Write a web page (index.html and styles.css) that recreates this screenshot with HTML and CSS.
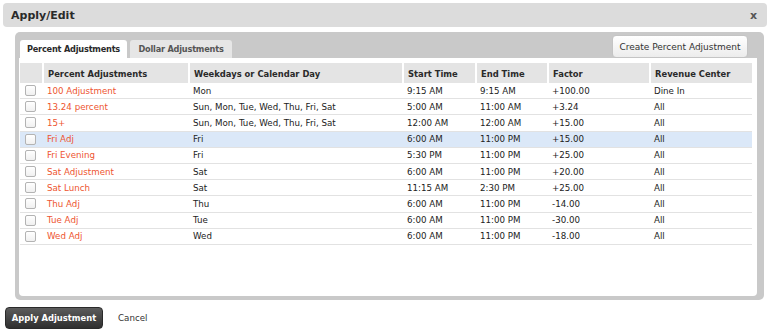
FILE: index.html
```html
<!DOCTYPE html>
<html lang="en">
<head>
<meta charset="UTF-8">
<title>Apply/Edit</title>
<link rel="stylesheet" href="styles.css">
</head>
<body>
    <div class="dialog">
        <div class="titlebar">
            <span class="title">Apply/Edit</span>
            <span class="close">x</span>
        </div>

        <div class="panel">
            <div class="tabbar">
                <div class="tabs">
                    <div class="tab active">Percent Adjustments</div>
                    <div class="tab">Dollar Adjustments</div>
                </div>
                <button class="create-btn">Create Percent Adjustment</button>
            </div>

            <div class="content">
                <table class="grid">
                    <colgroup>
                        <col style="width:23px">
                        <col style="width:146px">
                        <col style="width:214px">
                        <col style="width:73px">
                        <col style="width:72px">
                        <col style="width:102px">
                        <col style="width:102px">
                    </colgroup>
                    <thead>
                        <tr>
                            <th></th>
                            <th>Percent Adjustments</th>
                            <th>Weekdays or Calendar Day</th>
                            <th>Start Time</th>
                            <th>End Time</th>
                            <th>Factor</th>
                            <th>Revenue Center</th>
                        </tr>
                    </thead>
                    <tbody>
                        <tr><td><span class="check"></span></td><td class="name">100 Adjustment</td><td>Mon</td><td>9:15 AM</td><td>9:15 AM</td><td>+100.00</td><td>Dine In</td></tr>
                        <tr><td><span class="check"></span></td><td class="name">13.24 percent</td><td>Sun, Mon, Tue, Wed, Thu, Fri, Sat</td><td>5:00 AM</td><td>11:00 AM</td><td>+3.24</td><td>All</td></tr>
                        <tr><td><span class="check"></span></td><td class="name">15+</td><td>Sun, Mon, Tue, Wed, Thu, Fri, Sat</td><td>12:00 AM</td><td>12:00 AM</td><td>+15.00</td><td>All</td></tr>
                        <tr class="selected"><td><span class="check"></span></td><td class="name">Fri Adj</td><td>Fri</td><td>6:00 AM</td><td>11:00 PM</td><td>+15.00</td><td>All</td></tr>
                        <tr><td><span class="check"></span></td><td class="name">Fri Evening</td><td>Fri</td><td>5:30 PM</td><td>11:00 PM</td><td>+25.00</td><td>All</td></tr>
                        <tr><td><span class="check"></span></td><td class="name">Sat Adjustment</td><td>Sat</td><td>6:00 AM</td><td>11:00 PM</td><td>+20.00</td><td>All</td></tr>
                        <tr><td><span class="check"></span></td><td class="name">Sat Lunch</td><td>Sat</td><td>11:15 AM</td><td>2:30 PM</td><td>+25.00</td><td>All</td></tr>
                        <tr><td><span class="check"></span></td><td class="name">Thu Adj</td><td>Thu</td><td>6:00 AM</td><td>11:00 PM</td><td>-14.00</td><td>All</td></tr>
                        <tr><td><span class="check"></span></td><td class="name">Tue Adj</td><td>Tue</td><td>6:00 AM</td><td>11:00 PM</td><td>-30.00</td><td>All</td></tr>
                        <tr><td><span class="check"></span></td><td class="name">Wed Adj</td><td>Wed</td><td>6:00 AM</td><td>11:00 PM</td><td>-18.00</td><td>All</td></tr>
                    </tbody>
                </table>
            </div>
        </div>

        <div class="actions">
            <button class="apply-btn">Apply Adjustment</button>
            <span class="cancel">Cancel</span>
        </div>
    </div>
</body>
</html>
```

FILE: styles.css
```css
body {
    font-family: 'DejaVu Sans', Verdana, sans-serif;
    font-size: 8.7px;
    color: #222222;
    background-color: #ffffff;
    margin: 0;
    padding: 0;
}
.dialog {
    width: 770px;
    height: 334px;
}
.titlebar {
    margin: 3px 3px 0 3px;
    height: 24px;
    padding: 0 10px 0 8px;
    display: flex;
    align-items: center;
    justify-content: space-between;
    background-color: #dcdcdc;
    border-radius: 4px;
}
.title {
    font-size: 11px;
    font-weight: bold;
    color: #2a2a2a;
    padding-top: 1px;
}
.close {
    font-size: 11px;
    font-weight: bold;
    color: #555555;
}
.panel {
    margin: 5px 6px 0 15px;
    padding: 3px 7px 4px 4px;
    background-color: #c9c9c9;
    border-radius: 5px;
}
.tabbar {
    display: flex;
    justify-content: space-between;
    align-items: flex-end;
    height: 23px;
}
.tabs {
    display: flex;
    gap: 3px;
    margin-left: 1px;
}
.tab {
    width: 102px;
    height: 18px;
    line-height: 19px;
    text-align: center;
    font-size: 8.2px;
    font-weight: bold;
    letter-spacing: -0.2px;
    color: #555555;
    background-color: #e6e6e6;
    border-radius: 3px 3px 0 0;
}
.tab.active {
    width: 107px;
    color: #2a2a2a;
    background-color: #ffffff;
}
.create-btn {
    align-self: flex-start;
    width: 136px;
    height: 23px;
    margin-right: 9px;
    font-family: inherit;
    font-size: 9px;
    color: #333333;
    background: linear-gradient(#ffffff, #ececec);
    border: 1px solid #c4c4c4;
    border-radius: 4px;
    padding: 0;
}
.content {
    height: 238px;
    padding: 5px 5px 0 1px;
    background-color: #ffffff;
    border-radius: 0 0 4px 4px;
    box-sizing: border-box;
}
.grid {
    table-layout: fixed;
    width: 732px;
    border-collapse: collapse;
}
.grid th {
    height: 19px;
    padding: 1px 4px 0 4px;
    text-align: left;
    font-size: 8.4px;
    font-weight: bold;
    color: #2a2a2a;
    background-color: #e4e4e4;
    border-right: 2px solid #ffffff;
}
.grid th:last-child {
    border-right: none;
}
.grid td {
    height: 15.2px;
    padding: 0 4px;
    white-space: nowrap;
    border-bottom: 1px solid #e2e2e2;
}
.grid td:first-child {
    padding-left: 5px;
}
.grid tr.selected td {
    background-color: #dbe8f8;
}
.grid td.name {
    color: #ee5530;
}
.check {
    display: block;
    width: 9px;
    height: 9px;
    border: 1px solid #b3b3b3;
    border-radius: 2px;
    background: linear-gradient(#ffffff, #f0f0f0);
}
.actions {
    display: flex;
    align-items: center;
    gap: 15px;
    margin: 7px 0 0 5px;
}
.apply-btn {
    width: 98px;
    height: 22px;
    padding: 0;
    font-family: inherit;
    font-size: 8.4px;
    font-weight: bold;
    color: #ffffff;
    background: linear-gradient(#5c5c5c, #2f2f2f);
    border: 1px solid #2a2a2a;
    border-radius: 4px;
}
.cancel {
    color: #333333;
}
```
